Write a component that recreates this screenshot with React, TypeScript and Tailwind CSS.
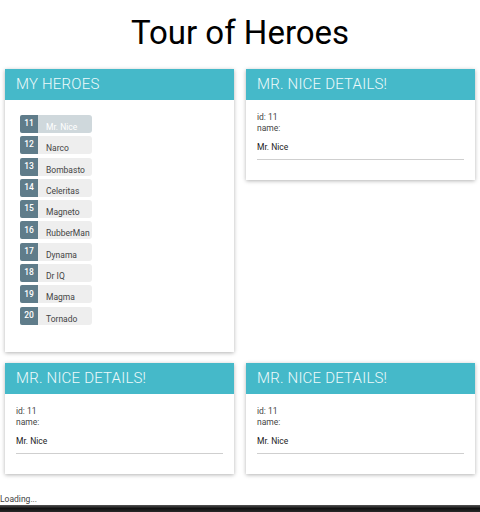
import React from 'react'

const heroes = [
  { id: 11, name: 'Mr. Nice' },
  { id: 12, name: 'Narco' },
  { id: 13, name: 'Bombasto' },
  { id: 14, name: 'Celeritas' },
  { id: 15, name: 'Magneto' },
  { id: 16, name: 'RubberMan' },
  { id: 17, name: 'Dynama' },
  { id: 18, name: 'Dr IQ' },
  { id: 19, name: 'Magma' },
  { id: 20, name: 'Tornado' },
]

function CardHeader({ title }: { title: string }) {
  return (
    <div className="h-[31px] bg-[#45b9c9] pl-[11px] flex items-center text-[15px] font-light text-[#eef9fb] tracking-[0.2px]">
      {title}
    </div>
  )
}

function HeroDetail() {
  return (
    <div className="bg-white shadow-[0_1px_4px_rgba(0,0,0,0.3)] h-[111px]">
      <CardHeader title="MR. NICE DETAILS!" />
      <div className="px-[11px] pt-[12px] text-[8.5px] text-[#444]">
        <div className="leading-[11px]">id: 11</div>
        <div className="leading-[11px]">name:</div>
        <div className="mt-[8px] leading-[11px] text-[#222] pb-[6px] border-b border-[#cfcfcf]">Mr. Nice</div>
      </div>
    </div>
  )
}

export default function App() {
  return (
    <div className="w-[480px] h-[512px] bg-white relative overflow-hidden font-['Roboto',sans-serif]">
      <h1 className="text-center text-[33px] leading-[40px] pt-[13px] text-black">Tour of Heroes</h1>
      <div className="grid grid-cols-2 gap-x-3 px-[5px] mt-[16px]">
        <div className="bg-white shadow-[0_1px_4px_rgba(0,0,0,0.3)] h-[283px]">
          <CardHeader title="MY HEROES" />
          <ul className="pl-[15px] pt-[15px] flex flex-col gap-[3.3px]">
            {heroes.map((h, i) => (
              <li key={h.id} className="flex h-[18px] w-[72px]">
                <span className="w-[18px] h-[18px] bg-[#5f7c8a] text-white text-[8.5px] font-medium rounded-l-[2px] flex items-center justify-center pb-[1px]">
                  {h.id}
                </span>
                <span
                  className={`flex-1 rounded-r-[3px] pl-[8px] text-[8.5px] pt-[7px] leading-[11px] ${
                    i === 0 ? 'bg-[#cfd8dc] text-white' : 'bg-[#eeeeee] text-[#444]'
                  }`}
                >
                  {h.name}
                </span>
              </li>
            ))}
          </ul>
        </div>
        <HeroDetail />
      </div>
      <div className="grid grid-cols-2 gap-x-3 px-[5px] mt-[11px]">
        <HeroDetail />
        <HeroDetail />
      </div>
      <div className="absolute left-0 top-[493px] text-[8.5px] text-[#444]">Loading...</div>
      <div className="absolute left-0 bottom-0 w-full h-[7px] bg-gradient-to-b from-[#555] via-[#111] to-[#2a2a2a]" />
    </div>
  )
}
